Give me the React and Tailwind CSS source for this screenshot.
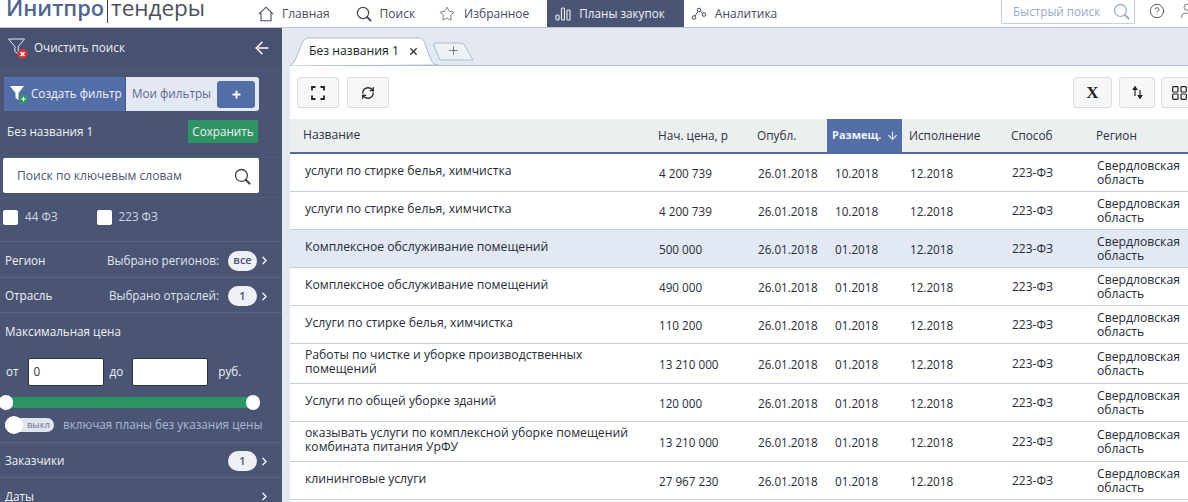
import React from 'react';
import { ArrowLeft, ArrowDown, ChevronRight, Star, RefreshCw, Plus, X, HelpCircle, User } from 'lucide-react';

const rows = [
  { name: 'услуги по стирке белья, химчистка', price: '4 200 739', placed: '10.2018', h: 'h-[38px]' },
  { name: 'услуги по стирке белья, химчистка', price: '4 200 739', placed: '10.2018', h: 'h-[38px]' },
  { name: 'Комплексное обслуживание помещений', price: '500 000', placed: '01.2018', h: 'h-[38px]', active: true },
  { name: 'Комплексное обслуживание помещений', price: '490 000', placed: '01.2018', h: 'h-[38px]' },
  { name: 'Услуги по стирке белья, химчистка', price: '110 200', placed: '01.2018', h: 'h-[38px]' },
  { name: 'Работы по чистке и уборке производственных помещений', price: '13 210 000', placed: '01.2018', h: 'h-[40px]' },
  { name: 'Услуги по общей уборке зданий', price: '120 000', placed: '01.2018', h: 'h-[38px]' },
  { name: 'оказывать услуги по комплексной уборке помещений комбината питания УрФУ', price: '13 210 000', placed: '01.2018', h: 'h-[40px]' },
  { name: 'клининговые услуги', price: '27 967 230', placed: '01.2018', h: 'h-[38px]' },
];

function SearchIcon({ size = 16, className = '' }) {
  return (
    <svg width={size} height={size} viewBox="0 0 16 16" fill="none" stroke="currentColor" className={`shrink-0 ${className}`}>
      <circle cx="7" cy="7" r="5.6" strokeWidth="1.2" />
      <path d="M11 11l3.6 3.6" strokeWidth="2" strokeLinecap="round" />
    </svg>
  );
}

function Pill({ children }) {
  return (
    <span className="flex h-[20px] w-[29px] items-center justify-center rounded-full bg-[#eef0f6] text-[11px] font-semibold text-[#4a5573]">
      {children}
    </span>
  );
}

function FilterRow({ label, right, pill, h }) {
  return (
    <div className={`flex items-center border-b border-[#5a6582] pl-[5px] pr-[11px] pt-[2px] text-[11.7px] ${h}`}>
      <span className="text-[#eef0f6]">{label}</span>
      <span className="ml-auto mr-[9px] text-[#dfe4ee]">{right}</span>
      {pill && <Pill>{pill}</Pill>}
      <ChevronRight size={13} strokeWidth={2.2} className="ml-[1px] text-white" />
    </div>
  );
}

function NavItem({ icon, label, active, className }) {
  return (
    <div className={`flex h-full items-center ${className} ${active ? 'bg-[#4a5573] text-[11.7px] text-[#eef0f6]' : 'text-[12px] text-[#444b5c]'}`}>
      {icon}
      <span>{label}</span>
    </div>
  );
}

function ToolButton({ children, w }) {
  return (
    <div className={`flex h-[31px] shrink-0 items-center justify-center rounded-[3px] border border-[#d9dcdf] bg-[#f7f7f7] text-[#222] ${w}`}>
      {children}
    </div>
  );
}

export default function App() {
  return (
    <div className="flex h-[502px] w-[1188px] flex-col overflow-hidden bg-white font-['Open_Sans',sans-serif] text-[#2c3340]">
      {/* шапка */}
      <header className="flex h-[28px] shrink-0 items-center border-b border-[#b9c6dc] bg-white">
        <div className="flex h-full w-[248px] shrink-0 items-start pl-[6px]">
          <span className="text-[21.8px] font-semibold leading-[16px] text-[#51668f]">Инитпро</span>
          <span className="mx-[3px] h-[23px] w-[1px] bg-[#444]" />
          <span className="text-[22.5px] leading-[16px] text-[#4b5058]">тендеры</span>
        </div>
        <nav className="flex h-full items-center">
          <NavItem
            label="Главная"
            className="gap-[8px] pl-[10px] pr-[16px]"
            icon={
              <svg width="16" height="16" viewBox="0 0 16 16" fill="none" stroke="currentColor" strokeWidth="1.1">
                <path d="M.8 8.2 8 1.2l7.2 7M3 6.4v8.3h10V6.4" />
              </svg>
            }
          />
          <NavItem label="Поиск" className="gap-[8px] pl-[10px] pr-[14px]" icon={<SearchIcon />} />
          <NavItem label="Избранное" className="gap-[9px] pl-[10px] pr-[18px]" icon={<Star size={16} strokeWidth={1.1} />} />
          <NavItem
            label="Планы закупок"
            active
            className="gap-[8px] pl-[8px] pr-[19px]"
            icon={
              <svg width="16" height="14" viewBox="0 0 16 14" fill="none" stroke="currentColor" strokeWidth="1.1">
                <rect x="1" y="8" width="3" height="5" rx="1" />
                <rect x="6.5" y="1" width="3" height="12" rx="1" />
                <rect x="12" y="3" width="3" height="10" rx="1" />
              </svg>
            }
          />
          <NavItem
            label="Аналитика"
            className="gap-[8px] pl-[7px]"
            icon={
              <svg width="16" height="14" viewBox="0 0 16 14" fill="none" stroke="currentColor" strokeWidth="1">
                <circle cx="3" cy="10.5" r="1.8" />
                <circle cx="8" cy="3" r="1.8" />
                <circle cx="13" cy="7.5" r="1.8" />
                <path d="M4 9 7 4.5M9.5 4.2 11.6 6.4" />
              </svg>
            }
          />
        </nav>
        <div className="ml-auto flex h-full items-start">
          <div className="flex h-[24px] w-[134px] items-center rounded-b-[2px] border border-t-0 border-[#c3cede] pl-[11px] pr-[4px] text-[11.7px] text-[#9aa8c4]">
            Быстрый поиск
            <SearchIcon size={17} className="ml-auto text-[#9fb0cc]" />
          </div>
          <HelpCircle size={16} strokeWidth={1.2} className="ml-[14px] mt-[3px] shrink-0 text-[#333]" />
          <User size={18} strokeWidth={1} className="ml-[13px] mr-[-8px] mt-[2px] shrink-0 text-[#555]" />
        </div>
      </header>

      <div className="flex min-h-0 flex-1">
        {/* фильтры */}
        <aside className="w-[282px] shrink-0 overflow-hidden bg-[#4a5573] text-[#eef0f6]">
          <div className="flex h-[38px] items-center bg-[#475170] pl-[7px] pr-[10px] pt-[1px] text-[11.7px]">
            <svg width="24" height="24" viewBox="0 0 24 24" className="shrink-0">
              <path d="M1.5 3h16l-6.2 7.5v7.5l-3.4-2.5v-5z" fill="none" stroke="#e6e9f0" strokeWidth="1" />
              <circle cx="15.5" cy="18" r="5" fill="#d43339" />
              <path d="M13.5 16l4 4m0-4-4 4" stroke="#fff" strokeWidth="1.5" />
            </svg>
            <span className="ml-[3px]">Очистить поиск</span>
            <ArrowLeft size={20} strokeWidth={1.8} className="ml-auto text-white" />
          </div>

          <div className="mx-[4px] mt-[11px] flex h-[34px] w-[255px] overflow-hidden rounded-[3px] bg-[#e4e8f2] text-[11.7px]">
            <div className="flex w-[122px] items-center border-r border-[#45598a] bg-[#536ea6] pl-[5px] text-[#eef0f6]">
              <svg width="20" height="20" viewBox="0 0 20 20" className="shrink-0">
                <path d="M1 2h14l-5.5 7v7l-3-2V9z" fill="#fff" />
                <circle cx="14.5" cy="15" r="4.5" fill="#2f9464" />
                <path d="M12.3 15h4.4M14.5 12.8v4.4" stroke="#fff" strokeWidth="1.2" />
              </svg>
              <span className="ml-[2px] whitespace-nowrap">Создать фильтр</span>
            </div>
            <div className="flex flex-1 items-center pl-[6px] text-[#5b6a8e]">
              <span>Мои фильтры</span>
              <span className="ml-auto mr-[4px] flex h-[27px] w-[38px] items-center justify-center rounded-[3px] bg-[#536ea6]">
                <Plus size={11} strokeWidth={4} className="text-white" />
              </span>
            </div>
          </div>

          <div className="mx-[7px] mt-[9px] flex h-[23px] w-[251px] items-center text-[11.7px]">
            <span>Без названия 1</span>
            <span className="ml-auto flex h-[23px] w-[70px] items-center justify-center bg-[#2f9464] text-[#eef0f6]">Сохранить</span>
          </div>

          <div className="mt-[14px] border-t border-[#505b79]">
            <div className="mx-[3px] flex h-[35px] w-[256px] items-center rounded-[2px] bg-white pl-[14px] pr-[8px] pt-[1px] text-[12.1px] text-[#4a5573]">
              Поиск по ключевым словам
              <SearchIcon size={17} className="ml-auto text-[#444]" />
            </div>
          </div>

          <div className="mt-[4px] flex h-[45px] items-center border-y border-t-[#505b79] border-b-[#5a6582] pb-[5px] pl-[3px] text-[11.7px] text-[#cdd4e4]">
            <span className="h-[15px] w-[15px] rounded-[2px] bg-white" />
            <span className="ml-[7px]">44 ФЗ</span>
            <span className="ml-[39px] h-[15px] w-[15px] rounded-[2px] bg-white" />
            <span className="ml-[7px]">223 ФЗ</span>
          </div>

          <FilterRow label="Регион" right="Выбрано регионов:" pill="все" h="h-[36px]" />
          <FilterRow label="Отрасль" right="Выбрано отраслей:" pill="1" h="h-[35px]" />

          <div className="flex h-[34px] items-center pl-[5px] pt-[3px] text-[11.7px]">Максимальная цена</div>

          <div className="mt-[11px] flex h-[28px] items-center pl-[6px] text-[11.7px]">
            <span>от</span>
            <span className="ml-[9px] flex h-[28px] w-[76px] items-center rounded-[2px] border border-[#2c3340] bg-white pl-[5px] text-[#333]">0</span>
            <span className="ml-[6px]">до</span>
            <span className="ml-[9px] h-[28px] w-[76px] rounded-[2px] border border-[#2c3340] bg-white" />
            <span className="ml-[10px]">руб.</span>
          </div>

          <div className="relative mt-[11px] h-[11px] w-[253px] bg-[#2f9464]">
            <span className="absolute -left-[1px] top-[-2px] h-[15px] w-[14px] rounded-full bg-white" />
            <span className="absolute right-[-7px] top-[-2px] h-[15px] w-[14px] rounded-full bg-white" />
          </div>

          <div className="mt-[10px] flex h-[14px] items-center pl-[5px] text-[11.7px] text-[#a9b7d6]">
            <span className="relative flex h-[14px] w-[49px] items-center justify-end rounded-full bg-[#dfe4ee] pr-[4px] text-[9.5px] text-[#6b7690]">
              выкл
              <span className="absolute left-0 top-[-2px] h-[18px] w-[18px] rounded-full bg-white" />
            </span>
            <span className="ml-[9px]">включая планы без указания цены</span>
          </div>

          <div className="mt-[10px] border-t border-[#5a6582]">
            <FilterRow label="Заказчики" pill="1" h="h-[35px]" />
            <FilterRow label="Даты" h="h-[36px]" />
          </div>
        </aside>

        <div className="w-[8px] shrink-0 bg-[#e4e8f0]" />

        {/* таблица */}
        <main className="flex min-w-0 flex-1 flex-col">
          <div className="relative flex h-[38px] shrink-0 items-center border-b border-[#a9b9d2] bg-[#e4e8f0]">
            <svg width="190" height="38" viewBox="0 0 190 38" className="absolute left-0 top-0">
              <path d="M150 32 144 18q-1-3 2-3h25q3 0 4 3l8 14z" fill="#eef1f6" stroke="#a9bcd8" />
              <path d="M0 38q4-2 6-8l7-17q2-3 6-3h109q4 0 6 3l7 19q2 5 7 5z" fill="#fff" stroke="#a9bcd8" />
            </svg>
            <div className="relative flex h-full w-[190px] items-center pl-[19px] pt-[9px] text-[12.2px] text-[#222]">
              Без названия 1
              <X size={11} strokeWidth={3} className="ml-[9px] text-[#333]" />
              <Plus size={13} strokeWidth={1.6} className="ml-[28px] mt-[-2px] text-[#666]" />
            </div>
          </div>

          <div className="flex h-[53px] shrink-0 items-center pl-[7px]">
            <ToolButton w="w-[42px]">
              <svg width="14" height="14" viewBox="0 0 14 14" fill="none" stroke="#222" strokeWidth="1.8">
                <path d="M1 4.5V1h3.5M9.5 1H13v3.5M13 9.5V13H9.5M4.5 13H1V9.5" />
              </svg>
            </ToolButton>
            <span className="ml-[8px]">
              <ToolButton w="w-[42px]"><RefreshCw size={14} strokeWidth={2.3} /></ToolButton>
            </span>
            <ToolButton w="ml-auto w-[39px]">
              <span className="font-['Liberation_Serif',serif] text-[17px] font-bold leading-none">X</span>
            </ToolButton>
            <ToolButton w="ml-[7px] w-[36px]">
              <svg width="11" height="13" viewBox="0 0 11 13" stroke="#222" strokeWidth="1.2" fill="#222">
                <path d="M3 10V2.5" /><path d="M1.2 3.5 3 .8l1.8 2.7z" /><path d="M8 4v7" /><path d="M6.2 9.5 8 12.2l1.8-2.7z" />
              </svg>
            </ToolButton>
            <ToolButton w="ml-[6px] mr-[-9px] w-[36px]">
              <svg width="15" height="14" viewBox="0 0 15 14" fill="none" stroke="#222" strokeWidth="1.2">
                <rect x=".7" y=".7" width="5.3" height="5.3" rx=".8" /><rect x="9" y=".7" width="5.3" height="5.3" rx=".8" />
                <rect x=".7" y="8" width="5.3" height="5.3" rx=".8" /><rect x="9" y="8" width="5.3" height="5.3" rx=".8" />
              </svg>
            </ToolButton>
          </div>

          <div className="flex h-[35px] shrink-0 items-center border-b-2 border-[#4d6aa3] bg-[#ecefef] text-[11.8px] text-[#2c3340]">
            <div className="w-[368px] shrink-0 pl-[13px] text-[12.1px]">Название</div>
            <div className="w-[99px] shrink-0">Нач. цена, р</div>
            <div className="w-[70px] shrink-0">Опубл.</div>
            <div className="flex h-full w-[75px] shrink-0 items-center bg-[#536ea6] pl-[5px] text-[11px] font-bold text-[#eef0f6]">
              Размещ.
              <ArrowDown size={13} strokeWidth={2} className="ml-[5px] shrink-0" />
            </div>
            <div className="w-[109px] shrink-0 pl-[7px]">Исполнение</div>
            <div className="w-[85px] shrink-0">Способ</div>
            <div>Регион</div>
          </div>

          {rows.map((row, i) => (
            <div key={i} className={`flex shrink-0 items-center border-b border-[#c5d0de] text-[11.7px] leading-[14px] text-[#262c38] ${row.h} ${row.active ? 'bg-[#e2e8f4]' : 'bg-white'}`}>
              <div className="mb-[4px] w-[369px] shrink-0 pl-[15px] pr-[22px] text-[12.2px]">{row.name}</div>
              <div className="w-[99px] shrink-0">{row.price}</div>
              <div className="w-[77px] shrink-0">26.01.2018</div>
              <div className="w-[75px] shrink-0">{row.placed}</div>
              <div className="w-[102px] shrink-0">12.2018</div>
              <div className="w-[85px] shrink-0 text-[12px]">223-ФЗ</div>
              <div className="w-[91px] shrink-0 text-[12.2px]">Свердловская область</div>
            </div>
          ))}
        </main>
      </div>
    </div>
  );
}
